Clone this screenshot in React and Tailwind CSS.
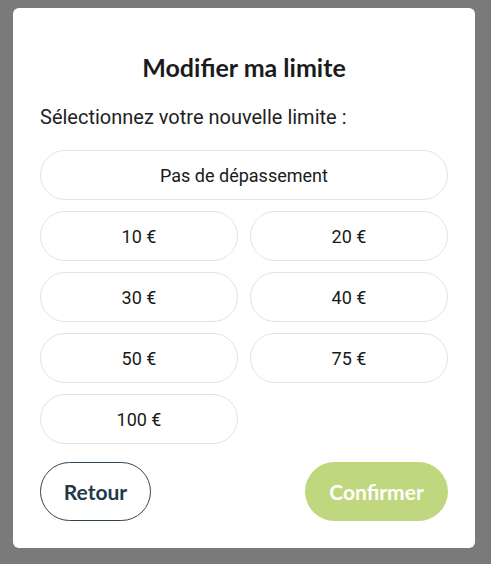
const options = ["10 €", "20 €", "30 €", "40 €", "50 €", "75 €", "100 €"];

function OptionButton({ label, className = "" }) {
  return (
    <button
      className={`h-[50px] rounded-full border border-[#e2e2e2] bg-white text-[18px] text-[#1a1a1a] ${className}`}
      style={{ fontFamily: "Roboto, sans-serif" }}
    >
      {label}
    </button>
  );
}

export default function App() {
  return (
    <div className="min-h-[564px] w-full bg-[#7a7a7a] pl-[13px] pr-[16px] pt-[8px] pb-[16px]">
      {/* Modal window */}
      <div className="rounded-[6px] bg-white px-[27px] pt-[44px] pb-[27px]">
        <h3
          className="text-center text-[25px] font-bold leading-[30px] text-[#1b1b1b]"
          style={{ fontFamily: "Lato, sans-serif" }}
        >
          Modifier ma limite
        </h3>
        <p
          className="mt-[22px] text-[20px] leading-[26px] text-[#222]"
          style={{ fontFamily: "Roboto, sans-serif" }}
        >
          Sélectionnez votre nouvelle limite :
        </p>

        <div className="mt-[20px] grid grid-cols-2 gap-x-[12px] gap-y-[11px]">
          <OptionButton label="Pas de dépassement" className="col-span-2" />
          {options.map((o) => (
            <OptionButton key={o} label={o} />
          ))}
        </div>

        <div className="mt-[18px] flex items-center justify-between">
          <button
            className="h-[59px] w-[111px] rounded-full border border-[#2d4656] text-[21px] font-bold text-[#1f3b4a]"
            style={{ fontFamily: "Lato, sans-serif" }}
          >
            Retour
          </button>
          <button
            className="h-[59px] w-[143px] rounded-full bg-[#bfd77e] text-[21px] font-bold text-white"
            style={{ fontFamily: "Lato, sans-serif" }}
          >
            Confirmer
          </button>
        </div>
      </div>
    </div>
  );
}
